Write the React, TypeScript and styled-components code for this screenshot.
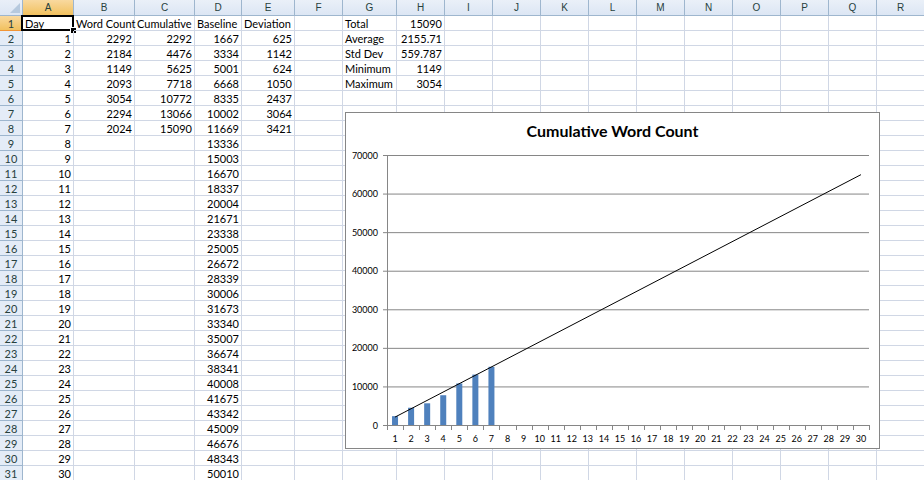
import { createGlobalStyle, styled } from "styled-components";

const GlobalStyle = createGlobalStyle`
    html, body {
        margin: 0;
        padding: 0;
        background: #ffffff;
        overflow: hidden;
    }
    body {
        font-family: Lato, "Liberation Sans", sans-serif;
    }
`;

const COLUMNS = [
    { name: "A", width: 51 },
    { name: "B", width: 61 },
    { name: "C", width: 60 },
    { name: "D", width: 47 },
    { name: "E", width: 53 },
    { name: "F", width: 48 },
    { name: "G", width: 54 },
    ..."HIJKLMNOPQR".split("").map((name) => ({ name, width: 48 })),
];

const wordCounts = [2292, 2184, 1149, 2093, 3054, 2294, 2024];
const cumulative = [2292, 4476, 5625, 7718, 10772, 13066, 15090];
const deviation = [625, 1142, 624, 1050, 2437, 3064, 3421];

const stats: Array<[string, string]> = [
    ["Total", "15090"],
    ["Average", "2155.71"],
    ["Std Dev", "559.787"],
    ["Minimum", "1149"],
    ["Maximum", "3054"],
];

type CellValue = { text: string; num?: boolean };

function buildRows(): Array<Array<CellValue | null>> {
    const rows: Array<Array<CellValue | null>> = [];
    const header = ["Day", "Word Count", "Cumulative", "Baseline", "Deviation"];
    for (let r = 0; r < 31; r++) {
        const row: Array<CellValue | null> = COLUMNS.map(() => null);
        if (r === 0) {
            header.forEach((h, i) => (row[i] = { text: h }));
        } else {
            const day = r;
            row[0] = { text: String(day), num: true };
            if (day <= 7) {
                row[1] = { text: String(wordCounts[day - 1]), num: true };
                row[2] = { text: String(cumulative[day - 1]), num: true };
                row[4] = { text: String(deviation[day - 1]), num: true };
            }
            row[3] = { text: String(1667 * day), num: true };
        }
        if (r < stats.length) {
            row[6] = { text: stats[r][0] };
            row[7] = { text: stats[r][1], num: true };
        }
        rows.push(row);
    }
    return rows;
}

const ROWS = buildRows();

// chart geometry, relative to the chart frame
const PLOT_LEFT = 41;
const PLOT_RIGHT = 523;
const PLOT_TOP = 42;
const PLOT_ZERO = 312;
const MAX_VALUE = 70000;
const CAT_W = (PLOT_RIGHT - PLOT_LEFT) / 30;
const yFor = (v: number) => PLOT_ZERO - (v / MAX_VALUE) * (PLOT_ZERO - PLOT_TOP);
const xCenter = (i: number) => PLOT_LEFT + CAT_W * (i + 0.5);

function CumulativeChart() {
    const ticks = [0, 10000, 20000, 30000, 40000, 50000, 60000, 70000];
    return (
        <ChartFrame>
            <ChartTitle>Cumulative Word Count</ChartTitle>
            <svg width="533" height="335" style={{ position: "absolute", left: 0, top: 0 }}>
                {ticks.map((t) => (
                    <g key={t}>
                        {t > 0 && (
                            <line x1={PLOT_LEFT} x2={PLOT_RIGHT} y1={yFor(t) + 0.5} y2={yFor(t) + 0.5} stroke="#868686" />
                        )}
                        <line x1={PLOT_LEFT - 4} x2={PLOT_LEFT} y1={yFor(t) + 0.5} y2={yFor(t) + 0.5} stroke="#868686" />
                        <text x={32} y={yFor(t) + 3.5} textAnchor="end" fontSize="9" fontFamily="Lato, 'Liberation Sans', sans-serif" fill="#000">
                            {t}
                        </text>
                    </g>
                ))}
                {cumulative.map((v, i) => (
                    <rect key={i} x={xCenter(i) - 3} y={yFor(v)} width={6} height={PLOT_ZERO - yFor(v)} fill="#4f81bd" />
                ))}
                <line x1={PLOT_LEFT + 0.5} x2={PLOT_LEFT + 0.5} y1={PLOT_TOP} y2={PLOT_ZERO} stroke="#868686" />
                <line x1={PLOT_LEFT} x2={PLOT_RIGHT} y1={PLOT_ZERO + 0.5} y2={PLOT_ZERO + 0.5} stroke="#868686" />
                {Array.from({ length: 31 }, (_, i) => (
                    <line
                        key={i}
                        x1={Math.round(PLOT_LEFT + CAT_W * i) + 0.5}
                        x2={Math.round(PLOT_LEFT + CAT_W * i) + 0.5}
                        y1={PLOT_ZERO}
                        y2={PLOT_ZERO + 5}
                        stroke="#868686"
                    />
                ))}
                {Array.from({ length: 30 }, (_, i) => (
                    <text key={i} x={xCenter(i)} y={329} textAnchor="middle" fontSize="9" fontFamily="Lato, 'Liberation Sans', sans-serif" fill="#000">
                        {i + 1}
                    </text>
                ))}
                <line x1={xCenter(0)} y1={yFor(2050)} x2={xCenter(29)} y2={yFor(64900)} stroke="#000" strokeWidth="1" />
            </svg>
        </ChartFrame>
    );
}

export default function App() {
    return (
        <>
            <GlobalStyle />
            <Workbook>
                <Sheet $columns={COLUMNS.map((c) => `${c.width}px`).join(" ")}>
                    <Corner />
                    {COLUMNS.map((c, i) => (
                        <ColHeader key={c.name} $active={i === 0}>
                            {c.name}
                        </ColHeader>
                    ))}
                    {ROWS.map((row, r) => (
                        <Row key={r} row={row} index={r} />
                    ))}
                </Sheet>
                <CumulativeChart />
            </Workbook>
        </>
    );
}

function Row({ row, index }: { row: Array<CellValue | null>; index: number }) {
    return (
        <>
            <RowHeader $active={index === 0}>{index + 1}</RowHeader>
            {row.map((cell, c) => (
                <Cell key={c} $num={!!cell?.num} $selected={index === 0 && c === 0}>
                    {cell?.text}
                </Cell>
            ))}
        </>
    );
}

const Workbook = styled.div`
    position: relative;
    width: 924px;
    height: 480px;
    overflow: hidden;
    background: #ffffff;
`;

const Sheet = styled.div<{ $columns: string }>`
    display: grid;
    grid-template-columns: 23px ${(p) => p.$columns};
    grid-template-rows: 16px;
    grid-auto-rows: 15px;
    font-size: 11px;
`;

const Corner = styled.div`
    position: relative;
    box-sizing: border-box;
    background: linear-gradient(#e9eff8, #dce6f4);
    border-right: 1px solid #9eb6ce;
    border-bottom: 1px solid #9eb6ce;
    &::after {
        content: "";
        position: absolute;
        right: 2px;
        bottom: 2px;
        border-left: 10px solid transparent;
        border-bottom: 10px solid #b6c9de;
    }
`;

const ColHeader = styled.div<{ $active: boolean }>`
    box-sizing: border-box;
    display: flex;
    align-items: center;
    justify-content: center;
    font-family: "Liberation Sans", Arial, sans-serif;
    font-size: 10px;
    color: #27413e;
    background: ${(p) =>
        p.$active ? "linear-gradient(#f9d99f, #f1c15f)" : "linear-gradient(#eaf0f8, #dce6f4)"};
    border-right: 1px solid #9eb6ce;
    border-bottom: 1px solid ${(p) => (p.$active ? "#f29536" : "#9eb6ce")};
`;

const RowHeader = styled.div<{ $active: boolean }>`
    box-sizing: border-box;
    display: flex;
    align-items: center;
    justify-content: center;
    font-size: 11px;
    color: #27413e;
    background: ${(p) => (p.$active ? "linear-gradient(#f9d99f, #f1c15f)" : "#e4ecf7")};
    border-right: 1px solid ${(p) => (p.$active ? "#f29536" : "#9eb6ce")};
    border-bottom: 1px solid ${(p) => (p.$active ? "#f29536" : "#9eb6ce")};
`;

const Cell = styled.div<{ $num: boolean; $selected: boolean }>`
    position: relative;
    box-sizing: border-box;
    display: flex;
    align-items: center;
    justify-content: ${(p) => (p.$num ? "flex-end" : "flex-start")};
    padding: 0 2px 0 2px;
    white-space: nowrap;
    color: #000;
    border-right: 1px solid #d0d7e5;
    border-bottom: 1px solid #d0d7e5;
    ${(p) =>
        p.$selected &&
        `
        &::before {
            content: "";
            position: absolute;
            left: -2px;
            top: -1px;
            right: -1px;
            bottom: -1px;
            border: 2px solid #000;
        }
        &::after {
            content: "";
            position: absolute;
            right: -4px;
            bottom: -4px;
            width: 5px;
            height: 5px;
            background: #000;
            border: 1px solid #fff;
        }
    `}
`;

const ChartFrame = styled.div`
    position: absolute;
    left: 345px;
    top: 112px;
    width: 535px;
    height: 337px;
    box-sizing: border-box;
    background: #ffffff;
    border: 1px solid #868686;
`;

const ChartTitle = styled.div`
    position: absolute;
    left: 0;
    right: 0;
    top: 8px;
    text-align: center;
    font-size: 16px;
    font-weight: bold;
    color: #000;
`;
